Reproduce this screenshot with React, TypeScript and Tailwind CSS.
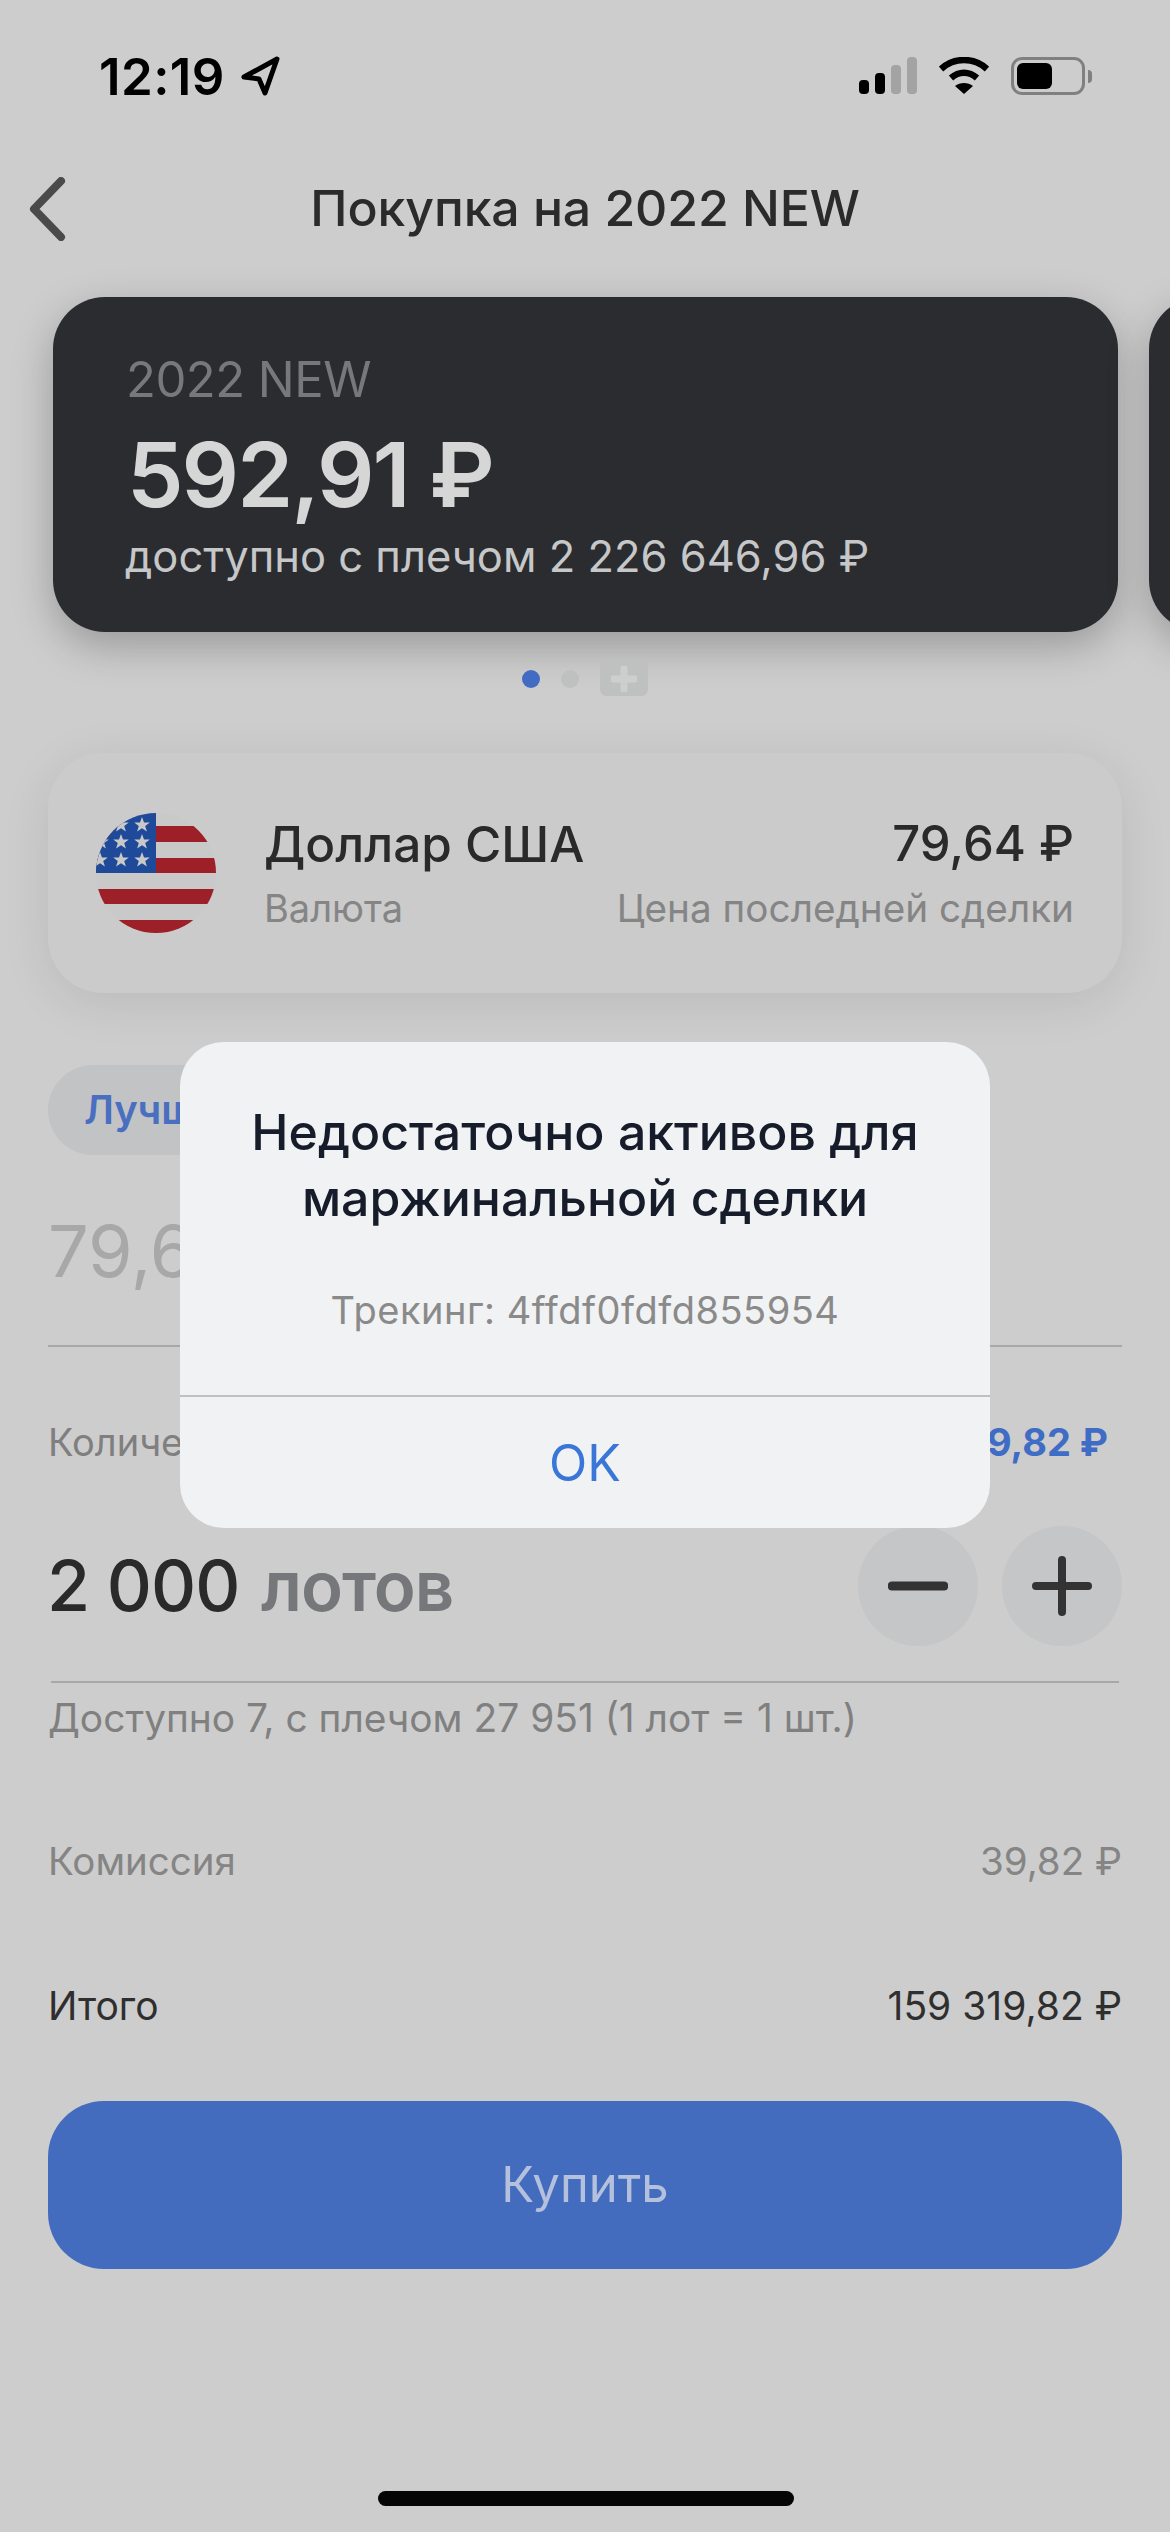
import React from "react";

const F = "font-['Inter','Noto_Sans',sans-serif]";

function Flag() {
  const stars: [number, number][] = [
    [22, 12], [43, 12], [22, 29], [43, 29], [1, 47], [22, 47], [43, 47], [2, 29],
  ];
  const star = "M0 -8 L2 -2.6 L7.8 -2.5 L3.2 1 L4.9 6.6 L0 3.3 L-4.9 6.6 L-3.2 1 L-7.8 -2.5 L-2 -2.6 Z";
  return (
    <svg width="120" height="120" viewBox="0 0 120 120" className="shrink-0">
      <defs>
        <clipPath id="c">
          <circle cx="60" cy="60" r="60" />
        </clipPath>
      </defs>
      <g clipPath="url(#c)">
        <rect width="120" height="120" fill="#c9c9c9" />
        <rect y="13" width="120" height="16" fill="#9d1f27" />
        <rect y="45" width="120" height="15" fill="#9d1f27" />
        <rect y="76" width="120" height="15" fill="#9d1f27" />
        <rect y="107" width="120" height="16" fill="#9d1f27" />
        <rect width="60" height="60" fill="#1f4a9a" />
        {stars.map(([x, y], i) => (
          <path key={i} d={star} transform={`translate(${x + 3} ${y})`} fill="#c9c9c9" />
        ))}
      </g>
    </svg>
  );
}

export default function App() {
  return (
    <div className={`${F} relative w-[1170px] h-[2532px] overflow-hidden bg-[#cdcdcd]`}>
      {/* status bar */}
      <div className="flex items-center justify-between pl-[99px] pr-[78px] h-[152px]">
        <div className="flex items-center gap-[15px]">
          <span className="text-[51px] font-semibold leading-none tracking-[0.4px] text-black">12:19</span>
          <svg width="40" height="40" viewBox="0 0 40 40">
            <path d="M37 3 L4 21 L19 23 L25 37 Z" fill="none" stroke="#000" strokeWidth="5" strokeLinejoin="round" />
          </svg>
        </div>
        <div className="flex items-center gap-[22px]">
          <svg width="58" height="38" viewBox="0 0 58 38">
            <rect x="0" y="23" width="10" height="14" rx="4" fill="#000" />
            <rect x="16" y="16" width="10" height="21" rx="4" fill="#000" />
            <rect x="32" y="8" width="10" height="29" rx="4" fill="#a3a3a3" />
            <rect x="48" y="0" width="10" height="37" rx="4" fill="#a3a3a3" />
          </svg>
          <svg width="50" height="38" viewBox="0 0 50 38">
            <path d="M2 12 C15 0 35 0 48 12" fill="none" stroke="#000" strokeWidth="6.5" />
            <path d="M12 21 C20 14 30 14 38 21" fill="none" stroke="#000" strokeWidth="6.5" />
            <path d="M25 37 L16 29 C21 25 29 25 34 29 Z" fill="#000" />
          </svg>
          <div className="flex items-center gap-[3px]">
            <div className="w-[74px] h-[38px] rounded-[11px] border-[3px] border-[#808080] p-[3px]">
              <div className="w-[35px] h-full rounded-[6px] bg-black" />
            </div>
            <div className="w-[4px] h-[13px] rounded-r-full bg-[#808080]" />
          </div>
        </div>
      </div>

      {/* nav */}
      <div className="relative flex items-center justify-center h-[112px]">
        <svg width="40" height="64" viewBox="0 0 40 64" className="absolute left-[27px] top-[25px]">
          <path d="M34 4 L7 32 L34 60" fill="none" stroke="#4a4a4a" strokeWidth="8" strokeLinecap="round" strokeLinejoin="round" />
        </svg>
        <span className="text-[50px] font-medium leading-none tracking-[-0.1px] text-[#2b2b2b]">Покупка на 2022 NEW</span>
      </div>

      {/* account cards */}
      <div className="flex gap-[31px] pl-[53px] mt-[33px]">
        <div className="w-[1065px] shrink-0 h-[335px] rounded-[52px] bg-[#2a2c30] pl-[74px] pt-[55px] shadow-[0_14px_40px_rgba(0,0,0,0.25)]">
          <div className="-ml-[1px] text-[49px] leading-[56px] tracking-[-0.5px] text-[#77787b]">2022 NEW</div>
          <div className="mt-[17px] text-[90px] font-semibold leading-[100px] tracking-[-2px] text-[#d6d6d6]">592,91 ₽</div>
          <div className="-ml-[2px] mt-[3px] text-[43.5px] leading-[56px] text-[#c6c7c8]">доступно с плечом 2 226 646,96 ₽</div>
        </div>
        <div className="w-[200px] shrink-0 h-[335px] rounded-[52px] bg-[#2a2c30] shadow-[0_14px_40px_rgba(0,0,0,0.25)]" />
      </div>

      {/* pager */}
      <div className="flex items-center justify-center gap-[21px] mt-[29px] h-[35px]">
        <div className="w-[18px] h-[18px] rounded-full bg-[#416cc2]" />
        <div className="w-[18px] h-[18px] rounded-full bg-[#bfc1c1]" />
        <div className="w-[48px] h-[35px] rounded-[6px] bg-[#bfc1c1] flex items-center justify-center">
          <svg width="26" height="26" viewBox="0 0 26 26">
            <path d="M13 2 V24 M2 13 H24" stroke="#cdcecd" strokeWidth="7" strokeLinecap="round" />
          </svg>
        </div>
      </div>

      {/* instrument */}
      <div className="mx-[48px] mt-[57px] h-[240px] rounded-[55px] bg-[#cbcbcb] shadow-[0_10px_50px_rgba(0,0,0,0.09)] flex items-center pl-[48px] pr-[48px]">
        <Flag />
        <div className="ml-[48px] flex-1 flex items-center justify-between">
          <div>
            <div className="text-[49.5px] font-medium leading-[60px] text-[#2a2a2a]">Доллар США</div>
            <div className="mt-[10px] text-[38px] leading-[48px] text-[#858585]">Валюта</div>
          </div>
          <div className="text-right">
            <div className="text-[49px] font-medium leading-[60px] text-[#2a2a2a]">79,64 ₽</div>
            <div className="mt-[10px] text-[38.7px] leading-[48px] text-[#858585]">Цена последней сделки</div>
          </div>
        </div>
      </div>

      {/* price */}
      <div className="px-[48px]">
        <div className="mt-[72px] w-[300px] h-[90px] rounded-full bg-[#c1c3c5] pl-[36px] flex items-center text-[40px] font-semibold text-[#4a6fc0]">
          Лучшая цена
        </div>
        <div className="mt-[52px] text-[72px] leading-[88px] text-[#a8a8a8]">79,64</div>
        <div className="mt-[50px] h-[2px] bg-[#a8a8a8]" />

        <div className="mt-[70px] flex items-center justify-between pr-[14px] h-[50px]">
          <span className="text-[38px] text-[#7f7f7f]">Количество</span>
          <span className="text-[38px] font-bold text-[#3f6cc4]">159 319,82 ₽</span>
        </div>

        <div className="mt-[59px] flex items-center justify-between">
          <div className="text-[70px] font-medium leading-[120px] tracking-[-1px] -ml-[1px]">
            <span className="text-[#2a2a2a]">2 000</span>{" "}
            <span className="ml-[4px] text-[69px] font-semibold text-[#76777a]">лотов</span>
          </div>
          <div className="flex gap-[24px]">
            <div className="w-[120px] h-[120px] rounded-full bg-[#c4c6c7] flex items-center justify-center">
              <svg width="60" height="60" viewBox="0 0 60 60">
                <path d="M4 30 H56" stroke="#333333" strokeWidth="9" strokeLinecap="round" />
              </svg>
            </div>
            <div className="w-[120px] h-[120px] rounded-full bg-[#c4c6c7] flex items-center justify-center">
              <svg width="60" height="60" viewBox="0 0 60 60">
                <path d="M4 30 H56 M30 4 V56" stroke="#333333" strokeWidth="8" strokeLinecap="round" />
              </svg>
            </div>
          </div>
        </div>
        <div className="mt-[35px] mx-[3px] h-[2px] bg-[#a8a8a8]" />
        <div className="mt-[10px] text-[38.9px] leading-[50px] text-[#808080]">Доступно 7, с плечом 27 951 (1 лот = 1 шт.)</div>

        <div className="mt-[94px] flex items-center justify-between h-[50px] text-[38.5px] text-[#858585]">
          <span>Комиссия</span>
          <span>39,82 ₽</span>
        </div>
        <div className="mt-[94px] flex items-center justify-between h-[50px] text-[39px] text-[#2f2f2f]">
          <span>Итого</span>
          <span>159 319,82 ₽</span>
        </div>
        <div className="mt-[70px] h-[168px] rounded-[56px] bg-[#436bbe] flex items-center justify-center text-[49px] text-[#b4c0dc]">
          Купить
        </div>
      </div>

      {/* home indicator */}
      <div className="absolute left-[378px] top-[2491px] w-[416px] h-[15px] rounded-full bg-[#050505]" />

      {/* alert */}
      <div className="absolute left-[180px] top-[1042px] w-[810px] h-[486px] rounded-[44px] bg-[#f1f2f3] flex flex-col">
        <div className="pt-[57px] text-center text-[50px] font-medium leading-[66px] text-[#161c2a]">
          Недостаточно активов для<br />маржинальной сделки
        </div>
        <div className="mt-[54px] text-center text-[38px] leading-[50px] tracking-[0.5px] text-[#8a8a8a]">Трекинг: 4ffdf0fdfd855954</div>
        <div className="mt-[60px] h-[2px] bg-[#c0c0c0]" />
        <div className="flex-1 flex items-center justify-center pt-[2px] text-[50px] text-[#3a76d8]">OK</div>
      </div>
    </div>
  );
}
